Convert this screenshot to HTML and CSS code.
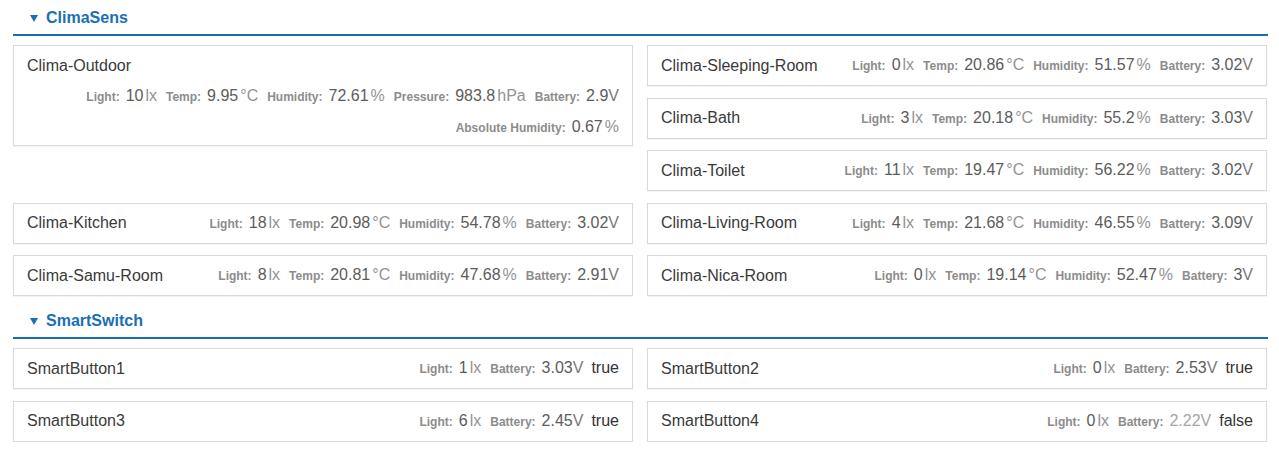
FILE: index.html
```html
<!DOCTYPE html>
<html>
<head>
<meta charset="utf-8">
<link rel="stylesheet" href="styles.css">
</head>
<body>
<div class="page">
  <section class="group">
    <h2 class="group-head"><span class="caret"></span>ClimaSens</h2>
    <div class="grid">
      <div class="card tall c1">
        <div class="name">Clima-Outdoor</div>
        <div class="stats"><span class="lbl">Light:</span><span class="val">10</span><span class="unit">lx</span><span class="lbl">Temp:</span><span class="val">9.95</span><span class="unit">°C</span><span class="lbl">Humidity:</span><span class="val">72.61</span><span class="unit">%</span><span class="lbl">Pressure:</span><span class="val">983.8</span><span class="unit">hPa</span><span class="lbl">Battery:</span><span class="val">2.9</span><span class="unit v">V</span></div>
        <div class="stats"><span class="lbl">Absolute Humidity:</span><span class="val">0.67</span><span class="unit">%</span></div>
      </div>
      <div class="card c2">
        <div class="name">Clima-Sleeping-Room</div>
        <div class="stats"><span class="lbl">Light:</span><span class="val">0</span><span class="unit">lx</span><span class="lbl">Temp:</span><span class="val">20.86</span><span class="unit">°C</span><span class="lbl">Humidity:</span><span class="val">51.57</span><span class="unit">%</span><span class="lbl">Battery:</span><span class="val">3.02</span><span class="unit v">V</span></div>
      </div>
      <div class="card c2">
        <div class="name">Clima-Bath</div>
        <div class="stats"><span class="lbl">Light:</span><span class="val">3</span><span class="unit">lx</span><span class="lbl">Temp:</span><span class="val">20.18</span><span class="unit">°C</span><span class="lbl">Humidity:</span><span class="val">55.2</span><span class="unit">%</span><span class="lbl">Battery:</span><span class="val">3.03</span><span class="unit v">V</span></div>
      </div>
      <div class="card c2">
        <div class="name">Clima-Toilet</div>
        <div class="stats"><span class="lbl">Light:</span><span class="val">11</span><span class="unit">lx</span><span class="lbl">Temp:</span><span class="val">19.47</span><span class="unit">°C</span><span class="lbl">Humidity:</span><span class="val">56.22</span><span class="unit">%</span><span class="lbl">Battery:</span><span class="val">3.02</span><span class="unit v">V</span></div>
      </div>
      <div class="card c1">
        <div class="name">Clima-Kitchen</div>
        <div class="stats"><span class="lbl">Light:</span><span class="val">18</span><span class="unit">lx</span><span class="lbl">Temp:</span><span class="val">20.98</span><span class="unit">°C</span><span class="lbl">Humidity:</span><span class="val">54.78</span><span class="unit">%</span><span class="lbl">Battery:</span><span class="val">3.02</span><span class="unit v">V</span></div>
      </div>
      <div class="card c2">
        <div class="name">Clima-Living-Room</div>
        <div class="stats"><span class="lbl">Light:</span><span class="val">4</span><span class="unit">lx</span><span class="lbl">Temp:</span><span class="val">21.68</span><span class="unit">°C</span><span class="lbl">Humidity:</span><span class="val">46.55</span><span class="unit">%</span><span class="lbl">Battery:</span><span class="val">3.09</span><span class="unit v">V</span></div>
      </div>
      <div class="card c1">
        <div class="name">Clima-Samu-Room</div>
        <div class="stats"><span class="lbl">Light:</span><span class="val">8</span><span class="unit">lx</span><span class="lbl">Temp:</span><span class="val">20.81</span><span class="unit">°C</span><span class="lbl">Humidity:</span><span class="val">47.68</span><span class="unit">%</span><span class="lbl">Battery:</span><span class="val">2.91</span><span class="unit v">V</span></div>
      </div>
      <div class="card c2">
        <div class="name">Clima-Nica-Room</div>
        <div class="stats"><span class="lbl">Light:</span><span class="val">0</span><span class="unit">lx</span><span class="lbl">Temp:</span><span class="val">19.14</span><span class="unit">°C</span><span class="lbl">Humidity:</span><span class="val">52.47</span><span class="unit">%</span><span class="lbl">Battery:</span><span class="val">3</span><span class="unit v">V</span></div>
      </div>
    </div>
  </section>
  <section class="group">
    <h2 class="group-head"><span class="caret"></span>SmartSwitch</h2>
    <div class="grid">
      <div class="card">
        <div class="name">SmartButton1</div>
        <div class="stats"><span class="lbl">Light:</span><span class="val">1</span><span class="unit">lx</span><span class="lbl">Battery:</span><span class="val">3.03</span><span class="unit v">V</span><span class="state">true</span></div>
      </div>
      <div class="card">
        <div class="name">SmartButton2</div>
        <div class="stats"><span class="lbl">Light:</span><span class="val">0</span><span class="unit">lx</span><span class="lbl">Battery:</span><span class="val">2.53</span><span class="unit v">V</span><span class="state">true</span></div>
      </div>
      <div class="card">
        <div class="name">SmartButton3</div>
        <div class="stats"><span class="lbl">Light:</span><span class="val">6</span><span class="unit">lx</span><span class="lbl">Battery:</span><span class="val">2.45</span><span class="unit v">V</span><span class="state">true</span></div>
      </div>
      <div class="card">
        <div class="name">SmartButton4</div>
        <div class="stats"><span class="lbl">Light:</span><span class="val">0</span><span class="unit">lx</span><span class="lbl">Battery:</span><span class="val low">2.22</span><span class="unit v low">V</span><span class="state">false</span></div>
      </div>
    </div>
  </section>
</div>
</body>
</html>
```

FILE: styles.css
```css
html, body {
  margin: 0;
  padding: 0;
  background: #ffffff;
}
body {
  font-family: "Liberation Sans", Arial, sans-serif;
  color: #333333;
}
.page {
  width: 1255px;
  padding-left: 13px;
}
.group + .group {
  margin-top: 7px;
}
.group-head {
  margin: 0 0 9px 0;
  padding: 8px 0 6px 17px;
  line-height: 20px;
  font-size: 16px;
  font-weight: bold;
  color: #1a6fb5;
  border-bottom: 2px solid #1b6db0;
  display: flex;
  align-items: center;
}
.caret {
  width: 0;
  height: 0;
  border-left: 4px solid transparent;
  border-right: 4px solid transparent;
  border-top: 7px solid #1a6fb5;
  margin-right: 8px;
  margin-top: 1px;
}
.grid {
  display: grid;
  grid-template-columns: 620px 620px;
  column-gap: 14px;
  grid-auto-rows: 41px;
  row-gap: 11.5px;
}
.card {
  box-sizing: border-box;
  border: 1px solid #d9d9d9;
  background: #fff;
  display: flex;
  align-items: center;
  justify-content: space-between;
  padding: 0 13px;
  height: 41px;
  box-shadow: 0 1px 1px rgba(0,0,0,0.04);
}
.c1 { grid-column: 1; }
.c2 { grid-column: 2; }
.card.tall {
  grid-row: 1 / span 3;
  align-self: start;
  height: 101px;
  display: block;
  padding: 10px 13px 4px;
}
.name {
  font-size: 16px;
  line-height: 20px;
  color: #3a3a3a;
  white-space: nowrap;
}
.tall .name {
  margin-bottom: 5px;
}
.stats {
  display: flex;
  align-items: baseline;
  justify-content: flex-end;
  white-space: nowrap;
  line-height: 30px;
}
.lbl {
  font-size: 12px;
  font-weight: bold;
  color: #8c8c8c;
  margin-left: 9px;
  margin-right: 6px;
}
.lbl:first-child { margin-left: 0; }
.val {
  font-size: 16px;
  color: #5c5c5c;
}
.unit {
  font-size: 16px;
  color: #939393;
  margin-left: 2px;
}
.unit.v { margin-left: 0; color: #7a7a7a; }
.low { color: #a6a6a6 !important; }
.state {
  font-size: 16px;
  color: #333;
  margin-left: 8px;
}
```
